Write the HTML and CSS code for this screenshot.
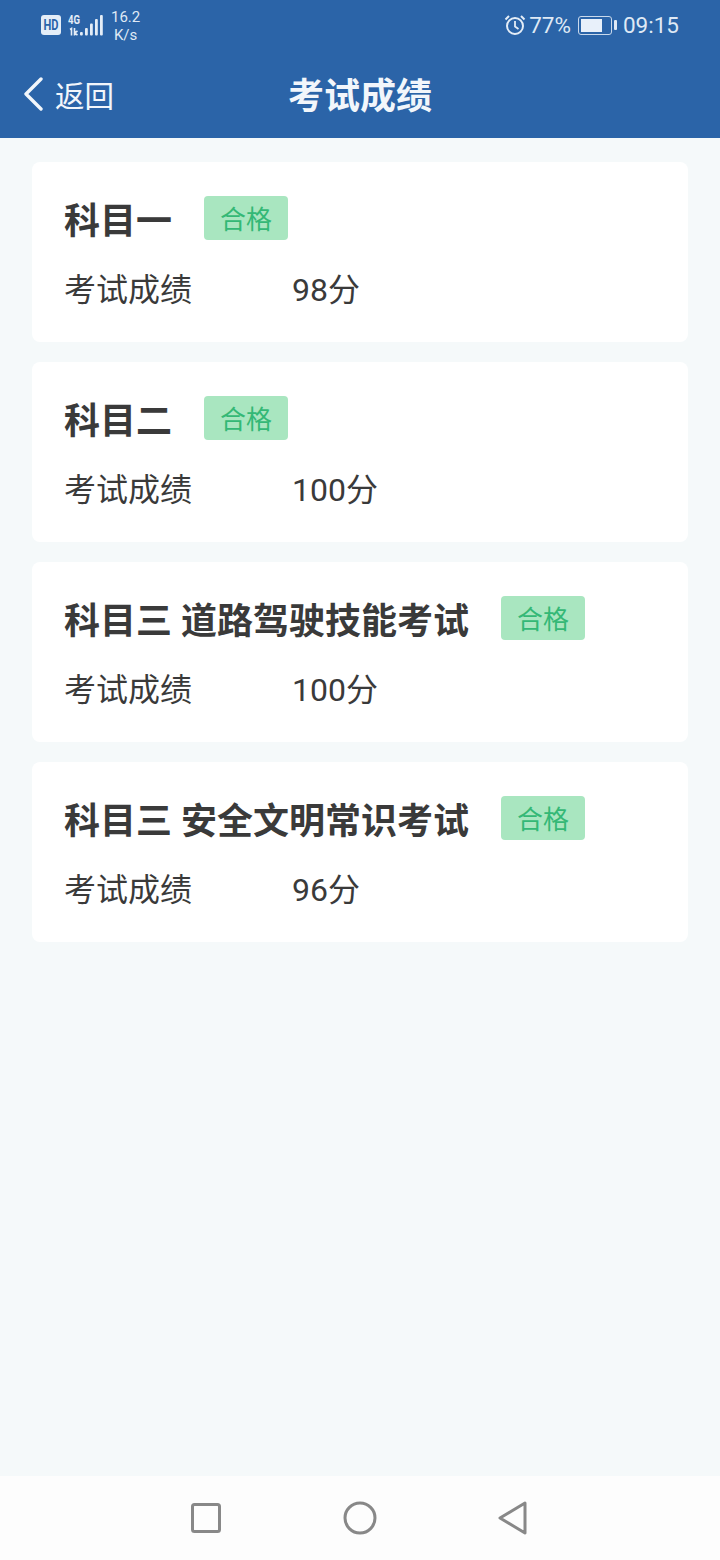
FILE: index.html
```html
<!DOCTYPE html>
<html lang="zh-CN">
<head>
    <meta charset="UTF-8">
    <title>考试成绩</title>
    <link rel="stylesheet" href="styles.css">
</head>
<body>
    <div class="header">
        <div class="status-bar">
            <div class="status-left">
                <svg class="hd-icon" width="20" height="20" viewBox="0 0 20 20">
                    <rect width="20" height="20" rx="3" fill="#e4edf7"/>
                    <text x="10" y="15" class="hd-text" textLength="15" lengthAdjust="spacingAndGlyphs">HD</text>
                </svg>
                <svg class="signal-icon" width="35" height="22" viewBox="0 0 35 22">
                    <text x="0" y="10" class="net-text" textLength="12" lengthAdjust="spacingAndGlyphs">4G</text>
                    <path d="M2 15.500l1.500-1v7M6.500 14v7.500M6.500 19l3 2M9.500 17l-3 2" stroke="#e4edf7" stroke-width="1.600" fill="none"/>
                    <rect x="12" y="18" width="2.800" height="3.500" rx="1" fill="#e4edf7"/>
                    <rect x="17" y="14" width="2.800" height="7.500" rx="1" fill="#e4edf7"/>
                    <rect x="22" y="9.500" width="2.800" height="12" rx="1" fill="#e4edf7"/>
                    <rect x="27" y="5" width="2.800" height="16.500" rx="1" fill="#e4edf7"/>
                    <rect x="32" y="1" width="2.800" height="20.500" rx="1" fill="#e4edf7"/>
                </svg>
                <div class="speed">16.2<br>K/s</div>
            </div>
            <div class="status-right">
                <svg width="22" height="22" viewBox="0 0 22 22" fill="none" stroke="#e4edf7">
                    <circle cx="11" cy="12" r="8" stroke-width="2"/>
                    <path d="M11 7v5.500l3.500 2.500" stroke-width="1.800"/>
                    <path d="M1.500 5.500L5 2M20.500 5.500L17 2" stroke-width="2"/>
                </svg>
                <span class="battery-pct">77%</span>
                <div class="battery">
                    <div class="battery-body"><div class="battery-fill"></div></div>
                    <div class="battery-tip"></div>
                </div>
                <span class="clock">09:15</span>
            </div>
        </div>
        <div class="nav">
            <div class="back">
                <svg width="22" height="34" viewBox="0 0 22 34" fill="none">
                    <path d="M19 2L4 17l15 15" stroke="#f2f6fb" stroke-width="3.400" stroke-linecap="round" stroke-linejoin="round"/>
                </svg>
                <span>返回</span>
            </div>
            <div class="nav-title">考试成绩</div>
        </div>
    </div>

    <div class="content">
        <div class="card">
            <div class="card-top">
                <span class="subject">科目一</span>
                <span class="badge">合格</span>
            </div>
            <div class="score-row">
                <span class="score-label">考试成绩</span>
                <span>98分</span>
            </div>
        </div>
        <div class="card">
            <div class="card-top">
                <span class="subject">科目二</span>
                <span class="badge">合格</span>
            </div>
            <div class="score-row">
                <span class="score-label">考试成绩</span>
                <span>100分</span>
            </div>
        </div>
        <div class="card">
            <div class="card-top">
                <span class="subject">科目三 道路驾驶技能考试</span>
                <span class="badge">合格</span>
            </div>
            <div class="score-row">
                <span class="score-label">考试成绩</span>
                <span>100分</span>
            </div>
        </div>
        <div class="card">
            <div class="card-top">
                <span class="subject">科目三 安全文明常识考试</span>
                <span class="badge">合格</span>
            </div>
            <div class="score-row">
                <span class="score-label">考试成绩</span>
                <span>96分</span>
            </div>
        </div>
    </div>

    <div class="softkeys">
        <svg width="32" height="32" viewBox="0 0 32 32" fill="none">
            <rect x="2.500" y="2.500" width="27" height="27" rx="2" stroke="#888" stroke-width="3"/>
        </svg>
        <svg width="34" height="34" viewBox="0 0 34 34" fill="none">
            <circle cx="17" cy="17" r="15" stroke="#888" stroke-width="3"/>
        </svg>
        <svg width="30" height="34" viewBox="0 0 30 34" fill="none">
            <path d="M27 2L2 17l25 15z" stroke="#888" stroke-width="3" stroke-linejoin="round"/>
        </svg>
    </div>
</body>
</html>
```

FILE: styles.css
```css
* {
    box-sizing: border-box;
}
body {
    margin: 0;
    height: 1560px;
    display: flex;
    flex-direction: column;
    background: #f5f9fa;
    color: #3a3a3a;
    font-family: "Roboto", "Noto Sans CJK SC", sans-serif;
}
.header {
    height: 138px;
    background: #2b64a8;
    color: #f2f6fb;
}
.status-bar {
    height: 50px;
    display: flex;
    justify-content: space-between;
    align-items: center;
    padding: 0 41px;
    color: #dfe9f5;
}
.status-left {
    display: flex;
    align-items: center;
}
.hd-text {
    font: bold 14px "Roboto", sans-serif;
    fill: #2b64a8;
    text-anchor: middle;
}
.net-text {
    font: bold 12px "Roboto", sans-serif;
    fill: #e4edf7;
}
.signal-icon {
    margin-left: 7px;
}
.speed {
    margin: 2px 0 0 8px;
    font-size: 15px;
    line-height: 18px;
    text-align: center;
}
.status-right {
    display: flex;
    align-items: center;
    font-size: 22.500px;
}
.battery-pct {
    margin-left: 3px;
}
.battery {
    display: flex;
    align-items: center;
    margin: 0 6px 0 7px;
}
.battery-body {
    width: 34px;
    height: 19px;
    padding: 2px;
    border: 1.500px solid #c9d9ec;
    border-radius: 3px;
}
.battery-fill {
    width: 76%;
    height: 100%;
    background: #e8f0fa;
}
.battery-tip {
    width: 3px;
    height: 10px;
    margin-left: 2px;
    border-radius: 1px;
    background: #dfe9f5;
}
.nav {
    height: 88px;
    display: grid;
    grid-template-columns: 1fr auto 1fr;
    align-items: center;
}
.back {
    display: flex;
    align-items: center;
    gap: 11px;
    padding-left: 22px;
    font-size: 29.500px;
}
.nav-title {
    font-size: 36px;
    font-weight: bold;
    margin-top: -2px;
}
.content {
    flex: 1;
    display: flex;
    flex-direction: column;
    gap: 20px;
    padding: 24px 32px;
}
.card {
    height: 180px;
    padding: 34px 32px 0;
    background: #fff;
    border-radius: 8px;
}
.card-top {
    display: flex;
    align-items: center;
    gap: 32px;
    height: 44px;
}
.subject {
    font-size: 36px;
    font-weight: bold;
    white-space: pre;
}
.badge {
    width: 84px;
    height: 44px;
    line-height: 48px;
    text-align: center;
    font-size: 26px;
    color: #34b876;
    background: #a9e6c0;
    border-radius: 4px;
}
.score-row {
    display: flex;
    margin-top: 26px;
    font-size: 32px;
    line-height: 48px;
}
.score-label {
    width: 228px;
}
.softkeys {
    height: 84px;
    padding-right: 2px;
    background: #fdfdfd;
    display: flex;
    align-items: center;
    justify-content: center;
    gap: 121px;
}
```
